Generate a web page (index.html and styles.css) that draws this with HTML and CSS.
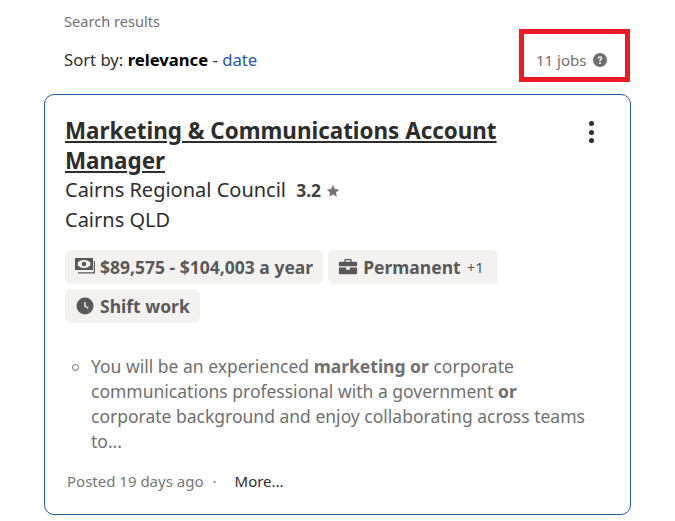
FILE: index.html
```html
<!DOCTYPE html>
<html>
<head>
	<title>Search results</title>
	<link rel="stylesheet" href="styles.css">
</head>
<body>
	<div class="page">
		<div class="searchLabel">Search results</div>
		<div class="sortRow">
			<div class="sortBy">Sort by: <b>relevance</b> - <a href="#" class="dateLink">date</a></div>
			<div class="jobCount">
				<span>11 jobs</span>
				<svg class="helpIcon" viewBox="0 0 16 16" width="14" height="14">
					<circle cx="8" cy="8" r="8" fill="#6f6f6f"/>
					<path d="M5.400 6.200c0-1.500 1.100-2.500 2.700-2.500s2.600.9 2.600 2.200c0 1-.5 1.500-1.300 2-.6.4-.8.6-.8 1.200v.2H7.100v-.4c0-.9.3-1.400 1.100-1.900.6-.4.8-.6.8-1 0-.5-.4-.8-1-.8s-1 .4-1 1z" fill="#fff"/>
					<circle cx="8" cy="11.600" r="1.100" fill="#fff"/>
				</svg>
			</div>
		</div>
		<div class="card">
			<div class="cardHead">
				<h2 class="jobTitle"><a href="#">Marketing &amp; Communications Account Manager</a></h2>
				<div class="kebab"><i></i><i></i><i></i></div>
			</div>
			<div class="company">Cairns Regional Council <span class="rating">3.2</span>
				<svg class="star" viewBox="0 0 16 16" width="14" height="14"><path d="M8 1l2.100 4.600 5 .6-3.700 3.400 1 5L8 11.900l-4.400 2.700 1-5L.9 6.200l5-.6z" fill="#767676"/></svg>
			</div>
			<div class="location">Cairns QLD</div>
			<div class="tags">
				<div class="tag">
					<svg class="tagIcon" viewBox="0 0 20 18" width="20" height="18">
						<rect x="0" y="0" width="18" height="12" fill="#595959"/>
						<ellipse cx="9" cy="6" rx="6.500" ry="4" fill="#f3f2f1"/>
						<circle cx="9" cy="6" r="2.300" fill="#595959"/>
						<path d="M18.800 3H20v12.500H3v-1.300h15.800z" fill="#595959"/>
					</svg>
					<span>$89,575 - $104,003 a year</span>
				</div>
				<div class="tag">
					<svg class="tagIcon" viewBox="-1 -1 22 19.800" width="20" height="18">
						<path fill-rule="evenodd" d="M6 3V1.500C6 .7 6.700 0 7.500 0h5c.8 0 1.500.7 1.500 1.500V3h4.500c.8 0 1.500.7 1.500 1.500V8H0V4.500C0 3.700.7 3 1.500 3zM7.500 1.500V3h5V1.500z" fill="#595959"/>
						<path d="M0 9.500h8V12h4V9.500h8v6c0 .8-.7 1.500-1.500 1.500h-17C.7 17 0 16.300 0 15.500z" fill="#595959"/>
					</svg>
					<span>Permanent</span><span class="more">+1</span>
				</div>
				<div class="tag">
					<svg class="tagIcon" viewBox="0 0 20 18" width="20" height="18">
						<circle cx="10" cy="9" r="8.500" fill="#595959"/>
						<path d="M9.300 5h1.400v3.800l3 1.900-.7 1.100-3.700-2.300z" fill="#f3f2f1"/>
					</svg>
					<span>Shift work</span>
				</div>
			</div>
			<ul class="snippet">
				<li><span class="bullet"></span><span>You will be an experienced <b>marketing or</b> corporate communications professional with a government <b>or</b> corporate background and enjoy collaborating across teams to...</span></li>
			</ul>
			<div class="cardFoot">
				<span class="posted">Posted 19 days ago</span>
				<span class="dot">&middot;</span>
				<a href="#" class="moreLink">More...</a>
			</div>
		</div>
	</div>
</body>
</html>
```

FILE: styles.css
```css
html, body{
	margin:0;
	padding:0;
	background:#fff;
}
body{
	font-family:"Noto Sans", sans-serif;
	overflow:hidden;
}
.page{
	width:587px;
	margin-left:44px;
	padding-top:12px;
}
.searchLabel{
	font-size:14.6px;
	line-height:19px;
	color:#6f6f6f;
	padding-left:20px;
}
.sortRow{
	display:flex;
	justify-content:space-between;
	align-items:center;
	margin-top:-2px;
	margin-bottom:12px;
	padding-left:20px;
}
.sortBy{
	padding-top:8px;
	font-size:16.67px;
	color:#2d2d2d;
}
.sortBy b{
	color:#000;
}
.dateLink{
	color:#2557a7;
	text-decoration:none;
}
.jobCount{
	display:flex;
	align-items:center;
	gap:7px;
	box-sizing:border-box;
	width:111px;
	height:53px;
	margin-right:1px;
	padding:8px 0 0 12px;
	border:5px solid #ed1c24;
	font-size:15px;
	color:#6f6f6f;
}
.helpIcon{
	display:block;
}
.card{
	box-sizing:border-box;
	height:421px;
	padding:20px 20px 0;
	border:1px solid #2557a7;
	border-radius:10px;
}
.cardHead{
	display:flex;
	justify-content:space-between;
}
.jobTitle{
	margin:1px 0 -1px;
	width:500px;
	font-size:22.4px;
	line-height:30px;
	font-weight:700;
}
.jobTitle a{
	color:#2d2d2d;
	text-decoration:underline;
}
.kebab{
	display:flex;
	flex-direction:column;
	gap:3.500px;
	padding:6px 16px 0 0;
}
.kebab i{
	display:block;
	width:5px;
	height:5px;
	border-radius:50%;
	background:#2d2d2d;
}
.company, .location{
	font-size:20px;
	line-height:30px;
	color:#2d2d2d;
}
.rating{
	margin-left:5px;
	font-size:17.4px;
	font-weight:700;
	color:#404040;
}
.star{
	vertical-align:-1px;
}
.tags{
	display:flex;
	flex-wrap:wrap;
	gap:5px;
	margin-top:15px;
	width:480px;
}
.tag{
	display:flex;
	align-items:center;
	gap:5px;
	height:34px;
	padding:0 10px;
	border-radius:6px;
	background:#f3f2f1;
	font-size:17.5px;
	font-weight:700;
	color:#595959;
}
.tagIcon{
	display:block;
}
.more{
	margin:0 4px 0 1px;
	font-size:15px;
	font-weight:400;
}
.snippet{
	margin:31px 0 0;
	padding:0 15px 0 0;
	list-style:none;
	font-size:17.5px;
	line-height:25px;
	color:#6f6f6f;
}
.snippet li{
	display:flex;
	align-items:flex-start;
}
.bullet{
	flex:none;
	box-sizing:border-box;
	width:7px;
	height:7px;
	margin:10px 13px 0 7px;
	border:1px solid #6f6f6f;
	border-radius:50%;
}
.snippet li span:last-child{
	margin-left:-1px;
}
.cardFoot{
	display:flex;
	align-items:center;
	margin-top:15px;
	padding-left:2px;
	font-size:15px;
	line-height:24px;
}
.posted{
	color:#767676;
}
.dot{
	margin:0 18px 0 9px;
	color:#767676;
}
.moreLink{
	color:#2d2d2d;
	text-decoration:none;
}
```
